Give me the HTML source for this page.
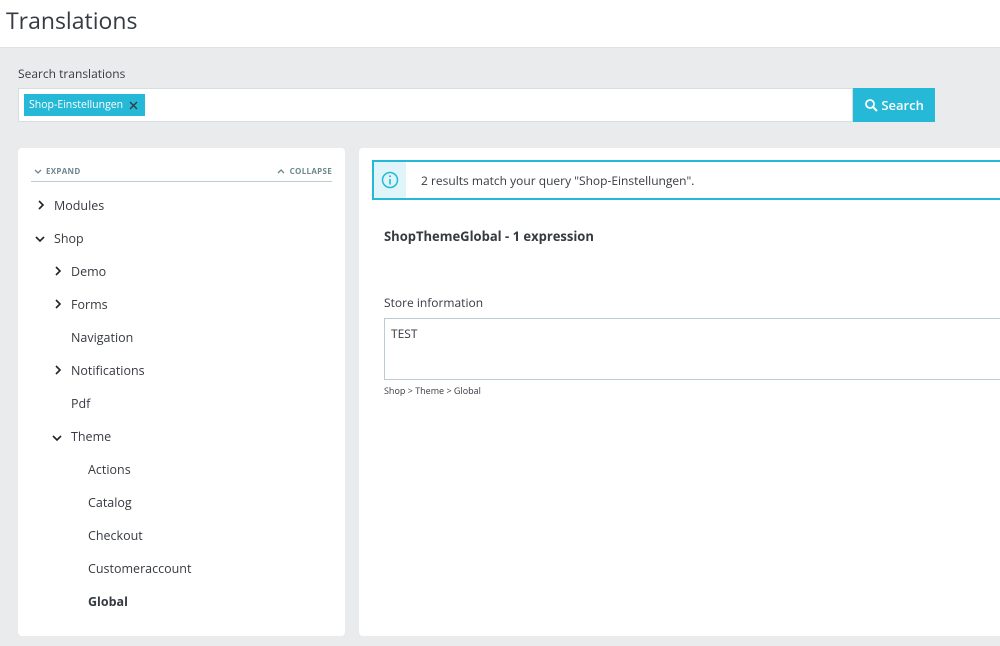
<!DOCTYPE html>
<html><head><meta charset="utf-8"><style>
*{box-sizing:border-box;margin:0;padding:0}
body{width:1000px;height:646px;overflow:hidden;background:#eaebec;font-family:"Open Sans","Liberation Sans",sans-serif;color:#363a41;position:relative}
.hdr{position:absolute;left:0;top:0;width:1000px;height:48px;background:#fff;border-bottom:1px solid #dfe2e4}
.hdr h1{position:absolute;left:6px;top:4px;font-size:23px;font-weight:400;color:#363a41}
.lbl{position:absolute;left:18px;top:65px;font-size:12px}
.inp{position:absolute;left:18px;top:88px;width:835px;height:34px;background:#fff;border:1px solid #d3dfe1}
.tag{position:absolute;left:5px;top:5px;height:22px;width:121px;background:#25b9d7;color:#fff;font-size:10.5px;padding:0 5px;line-height:22px;white-space:nowrap}
.btn{position:absolute;left:853px;top:88px;width:82px;height:34px;background:#25b9d7;color:#fff;font-size:13px;font-weight:600;line-height:34px;padding-left:12px}
.lp{position:absolute;left:18px;top:148px;width:327px;height:488px;background:#fff;border-radius:4px}
.rp{position:absolute;left:359px;top:148px;width:650px;height:488px;background:#fff;border-radius:4px}
.ec{position:absolute;left:13px;top:18px;width:301px;height:16px;border-bottom:1px solid #bbcdd2;font-size:8px;font-weight:700;color:#6c868e;letter-spacing:.3px}
.it{position:absolute;font-size:12.5px;color:#363a41}
.info{position:absolute;left:13px;top:12px;width:650px;height:40px;border:2px solid #25b9d7;background:#fff}
.info .ic{position:absolute;left:0;top:0;width:32px;height:36px;background:#dff5f9}
</style></head><body>
<div class="hdr"><h1>Translations</h1></div>
<div class="lbl">Search translations</div>
<div class="inp"><div class="tag">Shop-Einstellungen<svg style="position:absolute;right:7px;top:7px" width="9" height="9"><path d="M1 1l7 7M8 1l-7 7" stroke="#363a41" stroke-width="1.4"/></svg></div></div>
<div class="btn"><svg width="13" height="13" viewBox="0 0 13 13" style="vertical-align:-2px"><circle cx="5" cy="5" r="4" fill="none" stroke="#fff" stroke-width="1.8"/><path d="M8 8l4 4" stroke="#fff" stroke-width="2"/></svg> Search</div>
<div class="lp">
<div class="ec"><svg style="position:absolute;left:3px;top:3px" width="8" height="6"><path d="M1 1l3 3 3-3" fill="none" stroke="#6c868e" stroke-width="1.3"/></svg><span style="position:absolute;left:15px">EXPAND</span><svg style="position:absolute;right:47px;top:2px" width="8" height="6"><path d="M1 5l3-3 3 3" fill="none" stroke="#6c868e" stroke-width="1.3"/></svg><span style="position:absolute;right:0">COLLAPSE</span></div>
<svg style="position:absolute;left:19px;top:52px" width="8" height="10"><path d="M2 1l4 4-4 4" fill="none" stroke="#222" stroke-width="1.6"/></svg><div class="it" style="left:36px;top:49px">Modules</div>
<svg style="position:absolute;left:17px;top:87px" width="10" height="8"><path d="M1 2l4 4 4-4" fill="none" stroke="#222" stroke-width="1.6"/></svg><div class="it" style="left:36px;top:82px">Shop</div>
<svg style="position:absolute;left:36px;top:118px" width="8" height="10"><path d="M2 1l4 4-4 4" fill="none" stroke="#222" stroke-width="1.6"/></svg><div class="it" style="left:53px;top:115px">Demo</div>
<svg style="position:absolute;left:36px;top:151px" width="8" height="10"><path d="M2 1l4 4-4 4" fill="none" stroke="#222" stroke-width="1.6"/></svg><div class="it" style="left:53px;top:148px">Forms</div>
<div class="it" style="left:53px;top:181px">Navigation</div>
<svg style="position:absolute;left:36px;top:217px" width="8" height="10"><path d="M2 1l4 4-4 4" fill="none" stroke="#222" stroke-width="1.6"/></svg><div class="it" style="left:53px;top:214px">Notifications</div>
<div class="it" style="left:53px;top:247px">Pdf</div>
<svg style="position:absolute;left:34px;top:286px" width="10" height="8"><path d="M1 2l4 4 4-4" fill="none" stroke="#222" stroke-width="1.6"/></svg><div class="it" style="left:53px;top:280px">Theme</div>
<div class="it" style="left:70px;top:313px">Actions</div>
<div class="it" style="left:70px;top:346px">Catalog</div>
<div class="it" style="left:70px;top:379px">Checkout</div>
<div class="it" style="left:70px;top:412px">Customeraccount</div>
<div class="it" style="left:70px;top:445px;font-weight:700">Global</div>
</div>
<div class="rp">
<div class="info"><div class="ic"><svg style="position:absolute;left:7px;top:9px" width="18" height="18"><circle cx="9" cy="9" r="7.5" fill="none" stroke="#25b9d7" stroke-width="1.5"/><circle cx="9" cy="5.3" r="1" fill="#25b9d7"/><path d="M9 8v5.5" stroke="#25b9d7" stroke-width="1.6"/></svg></div><div style="position:absolute;left:47px;top:10px;font-size:12px">2 results match your query "Shop-Einstellungen".</div></div>
<div style="position:absolute;left:25px;top:79px;font-size:13px;font-weight:700">ShopThemeGlobal - 1 expression</div>
<div style="position:absolute;left:25px;top:146px;font-size:12px">Store information</div>
<div style="position:absolute;left:25px;top:170px;width:630px;height:62px;border:1px solid #bbcdd2;font-size:12px;padding:6px 6px">TEST</div>
<div style="position:absolute;left:25px;top:236px;font-size:9px">Shop &gt; Theme &gt; Global</div>
</div>
</body></html>
